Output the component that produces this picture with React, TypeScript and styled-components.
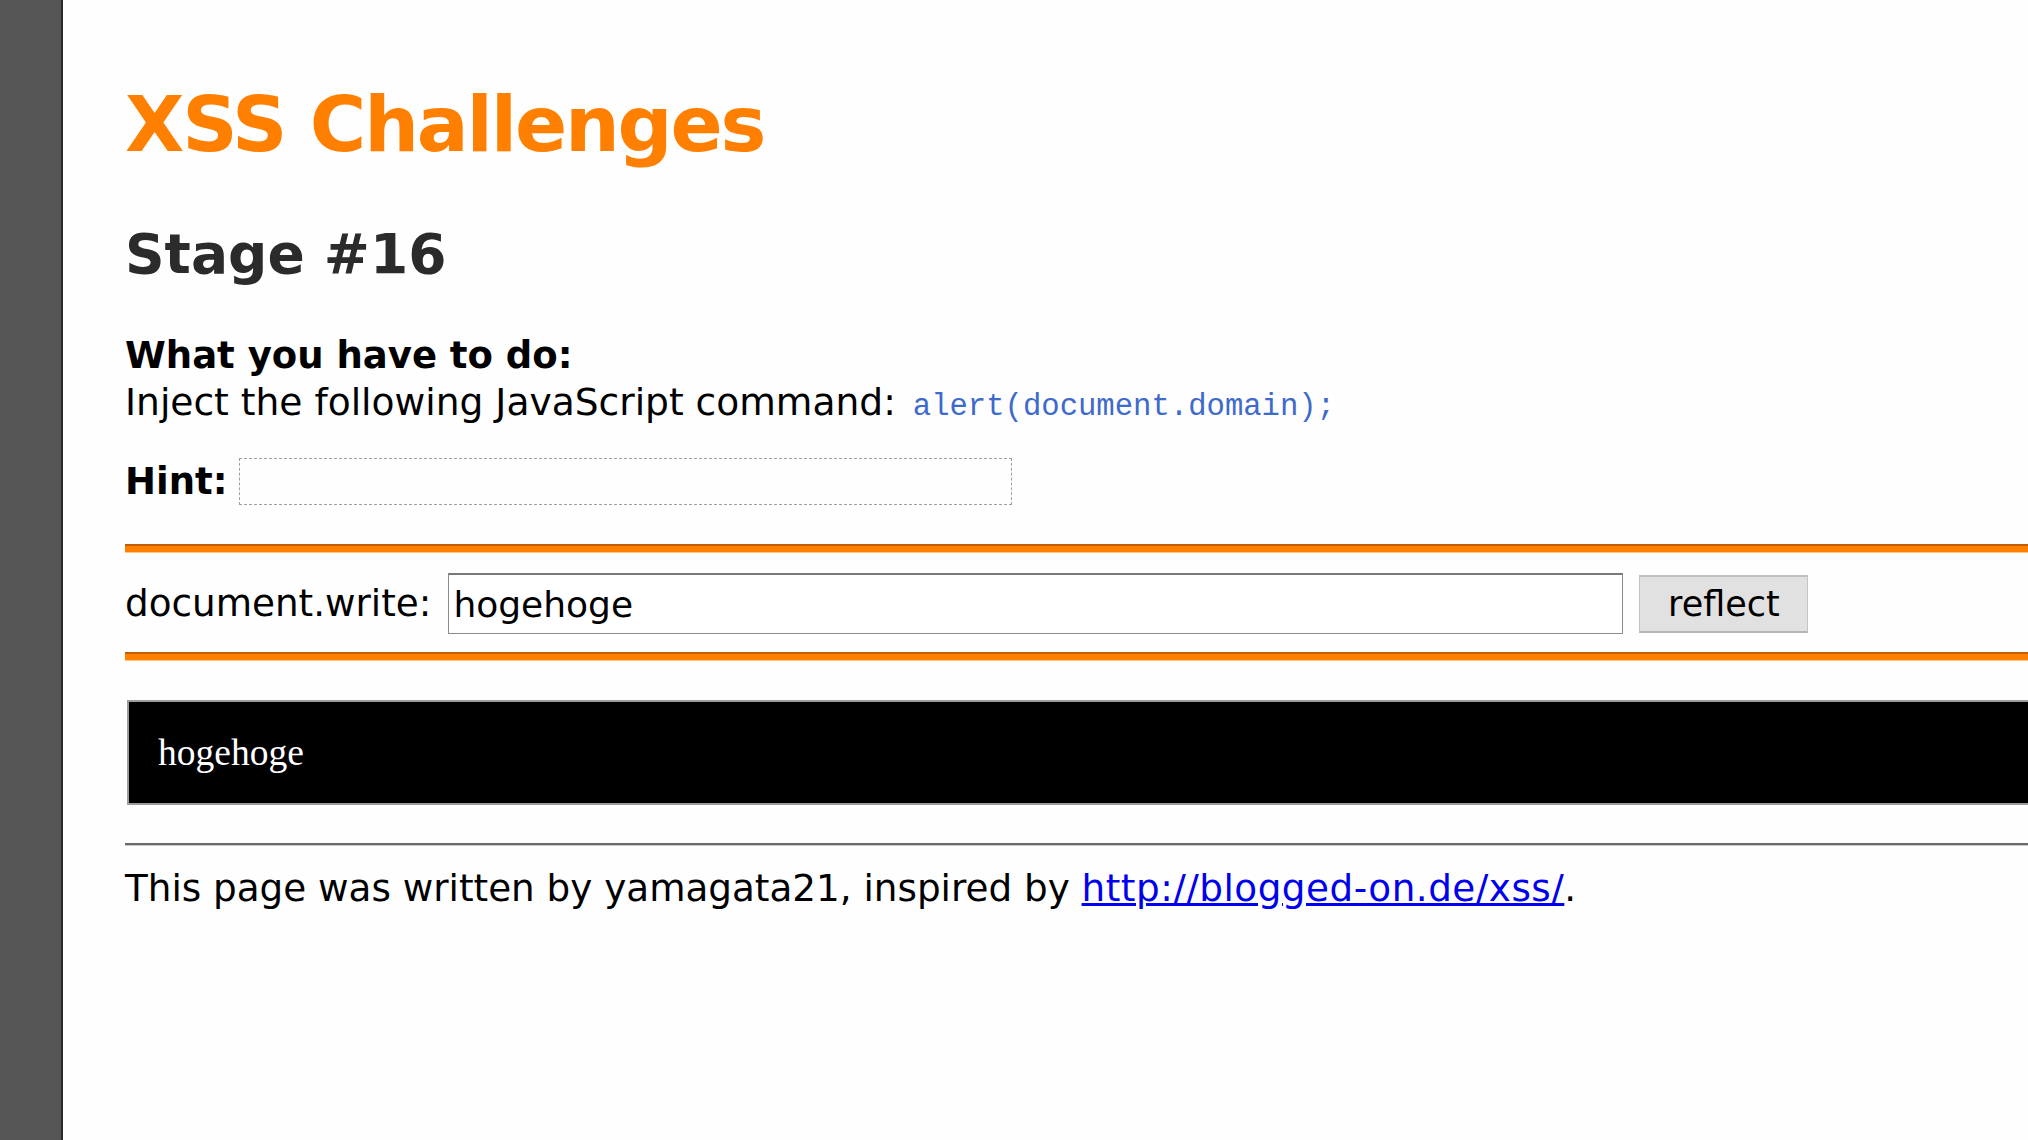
import React from "react";
import styled, { createGlobalStyle } from "styled-components";

const Global = createGlobalStyle`
  html, body { margin: 0; padding: 0; background: #fefefe; }
  body { font-family: "DejaVu Sans", Verdana, sans-serif; color: #000; }
`;

const Page = styled.div`
  display: flex;
  min-height: 1140px;
  width: 2028px;
  overflow: hidden;
`;

const Sidebar = styled.div`
  width: 61px;
  flex: none;
  background: #555555;
  border-right: 2px solid #2a2a2a;
`;

const Main = styled.main`
  flex: 1;
  padding-left: 62px;
  display: flex;
  flex-direction: column;
`;

const Title = styled.h1`
  margin: 75px 0 0;
  font-size: 77px;
  line-height: 100px;
  height: 100px;
  font-weight: bold;
  letter-spacing: -2.2px;
  color: #ff8000;
`;

const Stage = styled.h2`
  margin: 44px 0 0;
  font-size: 55px;
  line-height: 70px;
  height: 70px;
  font-weight: bold;
  color: #2b2b2b;
`;

const Line = styled.div<{ $bold?: boolean; $top?: number }>`
  margin-top: ${(p) => p.$top ?? 0}px;
  font-size: ${(p) => (p.$bold ? 37 : 37.6)}px;
  line-height: 46px;
  height: 46px;
  font-weight: ${(p) => (p.$bold ? "bold" : "normal")};
  white-space: nowrap;
`;

const Code = styled.code`
  font-family: "Liberation Mono", monospace;
  font-size: 30.6px;
  color: #3d6acb;
  margin-left: 5px;
`;

const HintRow = styled.div`
  margin-top: 33px;
  display: flex;
  align-items: flex-end;
  gap: 12px;
  height: 47px;
`;

const HintLabel = styled.span`
  font-size: 37px;
  font-weight: bold;
  line-height: 47px;
  padding-top: 3px;
`;

const HintBox = styled.div`
  width: 771px;
  height: 45px;
  border: 1px dashed #a0a0a0;
`;

const OrangeRule = styled.div<{ $top: number }>`
  margin-top: ${(p) => p.$top}px;
  height: 6px;
  background: #ff8000;
  border-top: 2px solid #c06000;
  border-bottom: 1px solid #ffc58a;
`;

const FormRow = styled.form`
  margin-top: 20px;
  display: flex;
  align-items: center;
  height: 61px;
`;

const FormLabel = styled.label`
  font-size: 37.3px;
  line-height: 61px;
  margin-right: 17px;
  white-space: nowrap;
`;

const TextInput = styled.input`
  box-sizing: border-box;
  width: 1175px;
  height: 61px;
  font-family: "DejaVu Sans", Verdana, sans-serif;
  font-size: 36px;
  padding: 0 4px;
  border: 1px solid #8c8c8c;
  border-top: 2px solid #7a7a7a;
  background: #fff;
  color: #000;
  outline: none;
`;

const Button = styled.button`
  box-sizing: border-box;
  margin-left: 16px;
  width: 169px;
  height: 58px;
  font-family: "DejaVu Sans", Verdana, sans-serif;
  font-size: 35px;
  color: #000;
  background: #e1e1e1;
  border: 1px solid #c4c4c4;
  border-top: 2px solid #c0c0c0;
  border-bottom: 2px solid #b5b5b5;
  padding: 0;
`;

const Output = styled.div`
  margin-top: 39px;
  margin-left: 2px;
  height: 105px;
  box-sizing: border-box;
  background: #000;
  border: 2px solid #9c9c9c;
  border-right: none;
  display: flex;
  align-items: center;
  padding-left: 29px;
  color: #fff;
  font-family: "Liberation Serif", serif;
  font-size: 37.5px;
`;

const Rule = styled.hr`
  margin: 38px 0 0;
  height: 0;
  border: none;
  border-top: 2px solid #6a6a6a;
  border-bottom: 1px solid #c8c8c8;
`;

const Footer = styled.p`
  margin: 19px 0 0;
  font-size: 37.3px;
  line-height: 46px;
  white-space: nowrap;
`;

const Link = styled.a`
  color: #0000ee;
  text-decoration: underline;
  letter-spacing: 0.5px;
`;

export default function App() {
  return (
    <>
      <Global />
      <Page>
        <Sidebar />
        <Main>
          <Title>XSS Challenges</Title>
          <Stage>Stage #16</Stage>
          <Line $bold $top={44}>What you have to do:</Line>
          <Line>
            Inject the following JavaScript command: <Code>alert(document.domain);</Code>
          </Line>
          <HintRow>
            <HintLabel>Hint:</HintLabel>
            <HintBox />
          </HintRow>
          <OrangeRule $top={39} />
          <FormRow onSubmit={(e) => e.preventDefault()}>
            <FormLabel>document.write:</FormLabel>
            <TextInput defaultValue="hogehoge" />
            <Button type="submit">reflect</Button>
          </FormRow>
          <OrangeRule $top={18} />
          <Output>hogehoge</Output>
          <Rule />
          <Footer>
            This page was written by yamagata21, inspired by{" "}
            <Link href="#">http://blogged-on.de/xss/</Link>.
          </Footer>
        </Main>
      </Page>
    </>
  );
}
